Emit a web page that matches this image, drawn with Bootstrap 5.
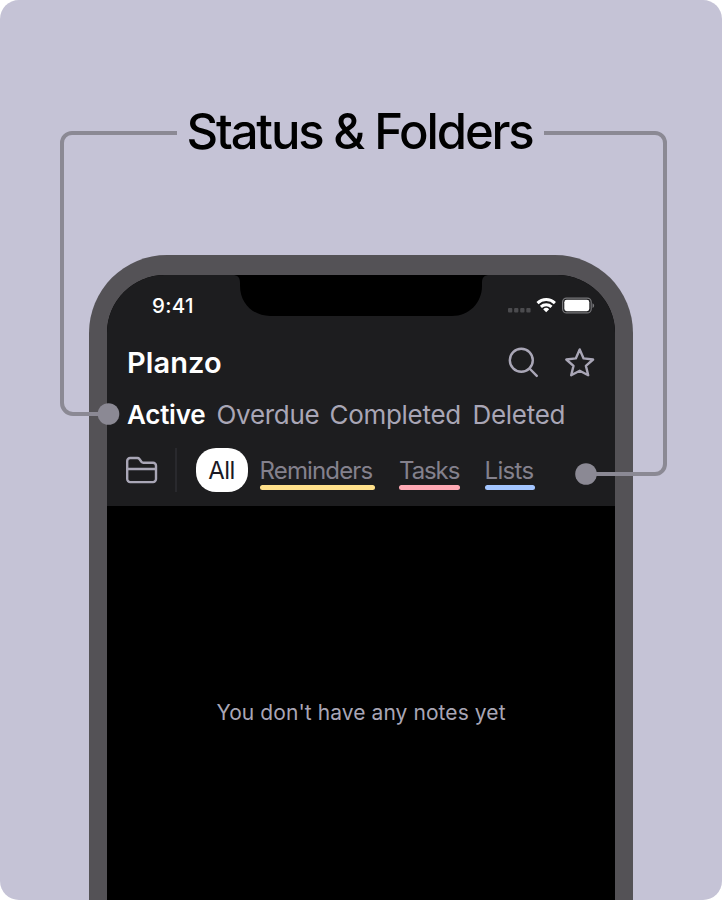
<!DOCTYPE html>
<html lang="en">
<head>
<meta charset="utf-8">
<meta name="viewport" content="width=device-width, initial-scale=1">
<title>Status &amp; Folders</title>
<link href="https://cdn.jsdelivr.net/npm/bootstrap@5.3.0/dist/css/bootstrap.min.css" rel="stylesheet">
<style>
body{font-family:Inter,"Liberation Sans",sans-serif;background:#fff;overflow:hidden}
.poster{width:722px;height:900px;background:#c5c3d6;border-radius:19px}
.headline{padding:102px 3px 0 0;height:255px;font-size:49px;line-height:60px;font-weight:500;color:#000;letter-spacing:-2.15px}
.phone{width:544px;height:645px;margin-left:89px;background:#545256;border-radius:78px 78px 0 0;padding:20px 18px 0}
.screen{border-radius:58px 58px 0 0;background:#000}
.top-area{height:231px;background:#1d1d1f}
.status-bar{height:62px;padding:0 20px 0 45px}
.clock{font-size:20.5px;font-weight:500;color:#fff;letter-spacing:.35px}
.notch{left:125px;top:0}
.title-bar{height:52px;padding:0 18px 0 20px}
.app-name{font-size:29px;font-weight:600;color:#fff;letter-spacing:.1px}
.tool-icons{gap:24px}
.tabs{height:50px;padding-left:20px;font-size:26px;font-weight:400;color:#a9a6b6;letter-spacing:-.3px}
.tabs .current{color:#fff;font-weight:600;letter-spacing:-.25px}
.tab-item{white-space:nowrap}
.tab-active{width:89.5px}.tab-overdue{width:113px}.tab-completed{width:143px}
.filters{height:62px;padding-left:18px;font-size:24px;color:#84818d;font-weight:400}
.rule{width:1.5px;height:44px;background:#29292d;margin-left:17px}
.pill{width:52px;height:44px;background:#fff;color:#1b1924;border-radius:20px;margin:0 12px 0 19px;padding-top:1px;letter-spacing:-.6px}
.folder-tag{height:40px;line-height:42px;white-space:nowrap}
.folder-tag::after{content:"";display:block;height:5px;margin-top:-7px;border-radius:2.5px;background:var(--tag)}
.tag-reminders{--tag:#ffe08a;width:115px;letter-spacing:-.85px}
.tag-tasks{--tag:#ffa9b4;width:61px;margin-left:24.5px;letter-spacing:-1.1px}
.tag-lists{--tag:#a3c5ff;width:50.5px;margin-left:24.5px;letter-spacing:-.65px}
.empty{height:413px;font-size:21px;font-weight:400;color:#a9a6b6;letter-spacing:.08px}
.links{left:0;top:0;pointer-events:none}
</style>
</head>
<body>
<main class="poster position-relative overflow-hidden">
<h1 class="headline text-center mb-0">Status &amp; Folders</h1>
<section class="phone">
<div class="screen h-100 overflow-hidden position-relative">
<div class="top-area">
<svg class="notch position-absolute" width="258" height="41" viewBox="0 0 258 41"><path d="M0 0c6 0 8 2.500 8 8v3c0 17 13 30 30 30h182c17 0 30-13 30-30V8c0-5.500 2-8 8-8z"/></svg>
<div class="status-bar d-flex align-items-center justify-content-between">
<span class="clock">9:41</span>
<svg width="87" height="18" viewBox="508 297 87 18" fill="none" aria-hidden="true">
<g fill="#4b4b4e"><rect x="508" y="308" width="4.300" height="4.500" rx="1"/><rect x="514.100" y="308" width="4.300" height="4.500" rx="1"/><rect x="520.200" y="308" width="4.300" height="4.500" rx="1"/><rect x="526.300" y="308" width="4.300" height="4.500" rx="1"/></g>
<g stroke="#fff" stroke-width="3"><path d="M537.500 303.100a12.600 12.600 0 0 1 17.400 0"/><path d="M540.900 306.800a7.900 7.900 0 0 1 10.600 0"/></g>
<path d="M546.200 312.300l-3-3.100a4.500 4.500 0 0 1 6 0z" fill="#fff"/>
<rect x="562.600" y="298.100" width="28.600" height="14.800" rx="4" stroke="#77777a" stroke-width="1.200"/><rect x="564.300" y="299.800" width="25" height="11.400" rx="2.400" fill="#fff"/><path d="M592.500 303.200c2.200.8 2.200 3.900 0 4.700z" fill="#77777a"/>
</svg>
</div>
<div class="title-bar d-flex align-items-center justify-content-between">
<span class="app-name">Planzo</span>
<div class="tool-icons d-flex">
<svg width="33" height="34" viewBox="507 346 33 34" fill="none" stroke="#a9a6b6" stroke-width="2.400" stroke-linecap="round" aria-label="Search"><circle cx="521.300" cy="360.300" r="11.500"/><path d="M529.500 368.500l7.300 7.400"/></svg>
<svg width="33" height="34" viewBox="564 346 33 34" fill="none" stroke="#a9a6b6" stroke-width="2.400" stroke-linejoin="round" aria-label="Favourites"><path d="M579.700 349.400l3.900 9 9.500 1.100-7.200 6.400 2.300 9.300-8.500-4.500-8.500 4.500 2.300-9.300-7.200-6.400 9.500-1.100z"/></svg>
</div>
</div>
<nav class="tabs d-flex align-items-center"><span class="tab-item tab-active current">Active</span><span class="tab-item tab-overdue">Overdue</span><span class="tab-item tab-completed">Completed</span><span class="tab-item">Deleted</span></nav>
<div class="filters d-flex align-items-center">
<svg width="33" height="30" viewBox="125 455 33 30" fill="none" stroke="#a9a6b6" stroke-width="2.400" stroke-linejoin="round" aria-label="Folders"><path d="M127.200 461a3 3 0 0 1 3-3h7.200a2.500 2.500 0 0 1 2 1l2 2.700a2.500 2.500 0 0 0 2 1H153a3 3 0 0 1 3 3v13.400a3 3 0 0 1-3 3h-22.800a3 3 0 0 1-3-3zM127.200 469H156"/></svg>
<span class="rule"></span>
<span class="pill d-flex align-items-center justify-content-center">All</span>
<span class="folder-tag tag-reminders">Reminders</span>
<span class="folder-tag tag-tasks">Tasks</span>
<span class="folder-tag tag-lists">Lists</span>
</div>
</div>
<div class="empty d-flex align-items-center justify-content-center">You don't have any notes yet</div>
</div>
</section>
<svg class="links position-absolute" width="722" height="900" viewBox="0 0 722 900" fill="none" stroke="#8b8994" stroke-width="4" aria-hidden="true">
<path d="M177 133H72a10 10 0 0 0-10 10V403a11 11 0 0 0 11 11H108M544 133H655a10 10 0 0 1 10 10V464a10 10 0 0 1-10 10H586"/>
<g fill="#8b8994" stroke="none"><circle cx="108.500" cy="414" r="10.800"/><circle cx="586" cy="474" r="10.800"/></g>
</svg>
</main>
</body>
</html>
